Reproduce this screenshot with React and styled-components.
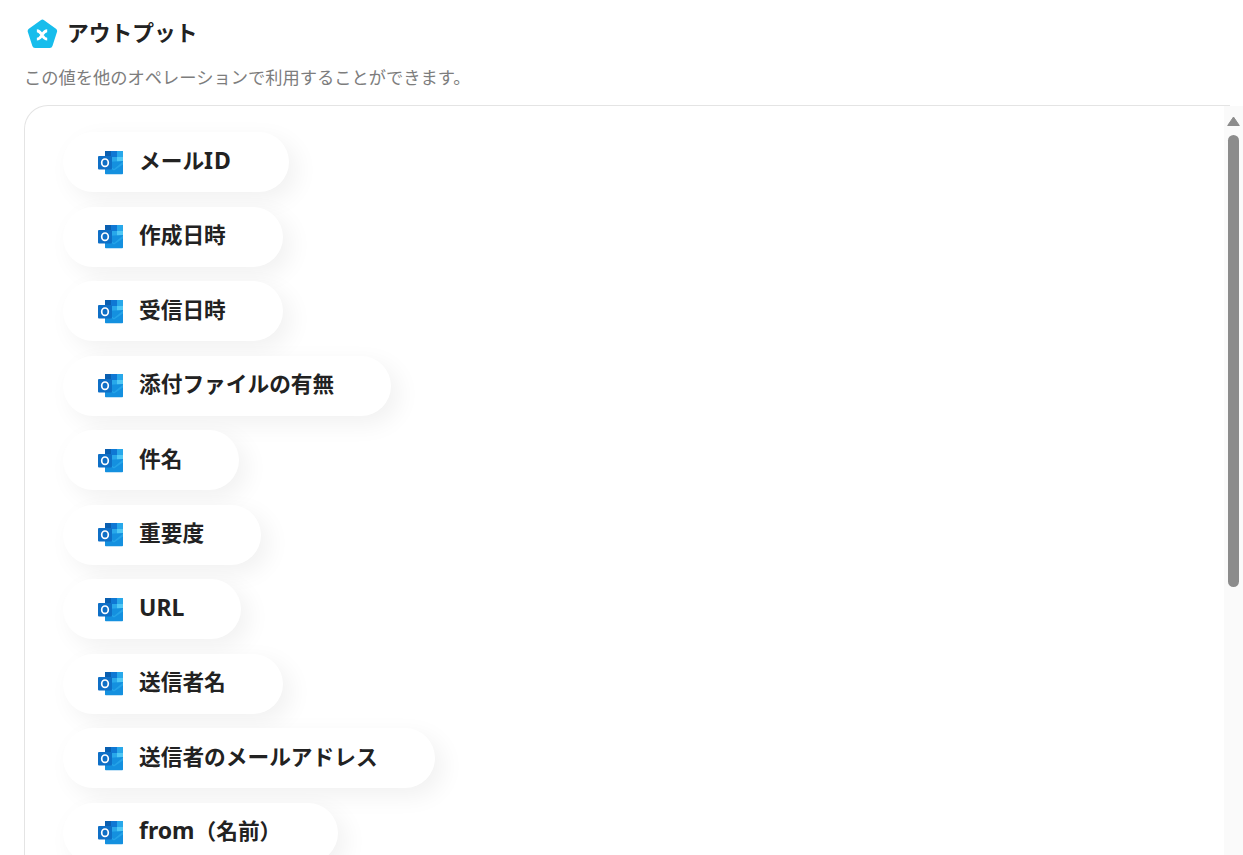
import React from 'react';
import styled, { createGlobalStyle } from 'styled-components';

const GlobalStyle = createGlobalStyle`
  html, body {
    margin: 0;
    padding: 0;
    height: 100%;
    overflow: hidden;
    background-color: #FFF;
  }
`;

const Page = styled.div`
  height: 855px;
  overflow: hidden;
  padding: 18px 0 0 25px;
  box-sizing: border-box;
  font-family: "Noto Sans", "Noto Sans CJK JP", sans-serif;
  position: relative;
`;

const Header = styled.div`
  display: flex;
  align-items: center;
  gap: 9px;
  height: 32px;
  padding-left: 2px;
`;

const Title = styled.h1`
  margin: -2px 0 0 0;
  font-size: 21.75px;
  font-weight: 700;
  line-height: 30px;
  color: #222;
`;

const Description = styled.p`
  margin: 16px 0 15px -1px;
  font-size: 17.25px;
  line-height: 24px;
  color: #7d7d7d;
`;

const Card = styled.div`
  display: flex;
  flex-direction: column;
  align-items: flex-start;
  gap: 14.5px;
  margin-right: 13px;
  margin-left: -1px;
  padding: 26px 0 0 38px;
  border: 1px solid #e4e4e4;
  border-right: none;
  border-bottom: none;
  border-radius: 24px 0 0 0;
`;

const Pill = styled.div`
  display: flex;
  flex-shrink: 0;
  align-items: center;
  gap: 15px;
  height: 60px;
  box-sizing: border-box;
  padding: 0 57px 0 35px;
  background-color: #FFF;
  border-radius: 30px;
  box-shadow: 8px 8px 24px rgba(0, 0, 0, 0.06);
`;

const PillLabel = styled.span`
  margin-bottom: 3px;
  font-size: 21.7px;
  font-weight: 700;
  line-height: 30px;
  color: #222;
  white-space: nowrap;
`;

const Latin = styled.span`
  font-size: 23px;
  line-height: 1;
  letter-spacing: ${(props) => props.$spacing || 0}px;
`;

const ScrollTrack = styled.div`
  position: absolute;
  top: 106px;
  right: 0;
  bottom: 0;
  width: 19px;
  background-color: #fafafa;
`;

const ScrollArrow = styled.svg`
  position: absolute;
  top: 10px;
  left: 3px;
`;

const ScrollThumb = styled.div`
  position: absolute;
  top: 29px;
  left: 4px;
  width: 11px;
  height: 452px;
  border-radius: 6px;
  background-color: #8c8c8c;
`;

const LogoIcon = () => (
  <svg width="31" height="31" viewBox="0 0 33 33">
    <path
      d="M14.6 1.200a3 3 0 0 1 3.600 0l12.600 9.200a3 3 0 0 1 1.100 3.400l-4.800 15a3 3 0 0 1-2.900 2.100H8.600a3 3 0 0 1-2.900-2.100L.9 13.800A3 3 0 0 1 2 10.400z"
      fill="#17bdec"
    />
    <path
      d="M10.500 12.500c3 0 3.500 1.500 5.500 4.500s2.500 4.500 5.500 4.500M21.500 12.500c-3 0-3.500 1.500-5.500 4.500s-2.500 4.500-5.500 4.500"
      fill="none"
      stroke="#fff"
      strokeWidth="3"
    />
  </svg>
);

const OutlookIcon = () => (
  <svg width="26" height="25" viewBox="0 0 26 25">
    <rect x="7" y="1" width="18" height="12" fill="#0f78d4" />
    <rect x="7" y="1" width="6" height="6" fill="#0a5fb0" />
    <rect x="13" y="1" width="6" height="6" fill="#0f78d4" />
    <rect x="19" y="1" width="6" height="6" fill="#28a8ea" />
    <rect x="13" y="7" width="6" height="6" fill="#28a8ea" />
    <rect x="19" y="7" width="6" height="6" fill="#50c8f5" />
    <path d="M7 12l18-1v12.500a.8.800 0 0 1-.8.800H7.800a.8.800 0 0 1-.8-.800z" fill="#1490df" />
    <path d="M7 12.500l9 6.500 9-7.500v3l-9 6-9-5z" fill="#28a8ea" opacity="0.8" />
    <rect x="0" y="6" width="14" height="13.500" rx="1" fill="#0f6fc6" />
    <ellipse cx="7" cy="12.700" rx="3.300" ry="3.700" fill="none" stroke="#fff" strokeWidth="1.700" />
  </svg>
);

const outputs = [
  { id: 'mail-id', label: <>メール<Latin $spacing={1}>ID</Latin></> },
  { id: 'created', label: '作成日時' },
  { id: 'received', label: '受信日時' },
  { id: 'attachment', label: '添付ファイルの有無' },
  { id: 'subject', label: '件名' },
  { id: 'importance', label: '重要度' },
  { id: 'url', label: <Latin>URL</Latin> },
  { id: 'sender', label: '送信者名' },
  { id: 'sender-address', label: '送信者のメールアドレス' },
  { id: 'from', label: <><Latin>from</Latin>（名前）</> },
];

const App = () => {
  return (
    <Page>
      <GlobalStyle />
      <Header>
        <LogoIcon />
        <Title>アウトプット</Title>
      </Header>
      <Description>この値を他のオペレーションで利用することができます。</Description>
      <Card>
        {outputs.map((item) => (
          <Pill key={item.id}>
            <OutlookIcon />
            <PillLabel>{item.label}</PillLabel>
          </Pill>
        ))}
      </Card>
      <ScrollTrack>
        <ScrollArrow width="13" height="10" viewBox="0 0 13 10">
          <path d="M6.500 1L12.300 9.500H.7z" fill="#8c8c8c" stroke="#8c8c8c" strokeLinejoin="round" />
        </ScrollArrow>
        <ScrollThumb />
      </ScrollTrack>
    </Page>
  );
};

export default App;
